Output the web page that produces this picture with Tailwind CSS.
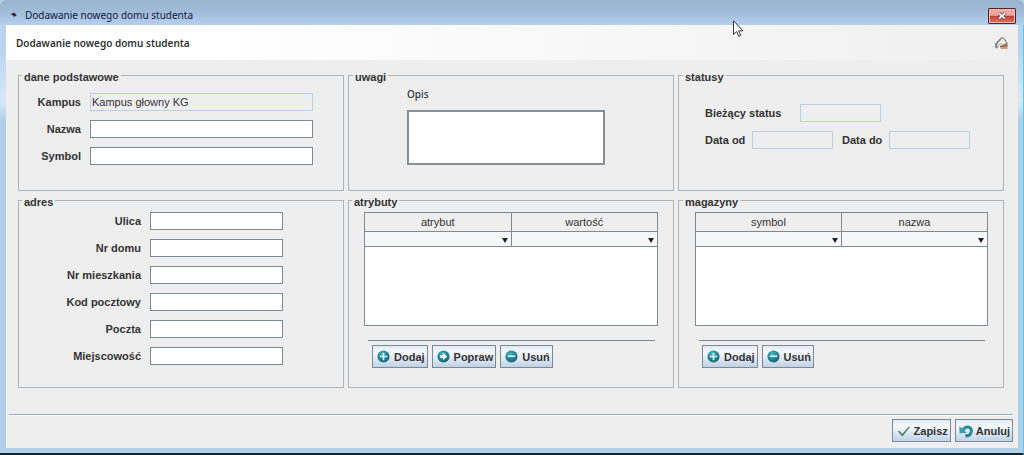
<!DOCTYPE html>
<html lang="pl">
<head>
<meta charset="utf-8">
<meta name="viewport" content="width=device-width, initial-scale=1">
<title>Dodawanie nowego domu studenta</title>
<script src="https://cdn.jsdelivr.net/npm/@tailwindcss/browser@4"></script>
</head>
<body class="min-h-screen flex flex-col bg-[#b7d2ea] font-['Liberation_Sans',Arial,sans-serif] text-[11px] leading-3 text-[#333]">

<svg class="absolute size-0" aria-hidden="true">
  <defs>
    <radialGradient id="ball" cx="0.4" cy="0.3" r="0.75">
      <stop offset="0" stop-color="#4db3bd"/><stop offset="0.55" stop-color="#218592"/><stop offset="1" stop-color="#17606f"/>
    </radialGradient>
    <symbol id="add" viewBox="0 0 14 14"><circle cx="7" cy="7" r="6.5" fill="url(#ball)"/><path d="M7 3v8M3 7h8" stroke="#d4f4f5" stroke-width="1.8"/></symbol>
    <symbol id="edit" viewBox="0 0 14 14"><circle cx="7" cy="7" r="6.5" fill="url(#ball)"/><path d="M3.5 5.4h3V3L11 7l-4.500 4V8.600h-3z" fill="#effcfc"/></symbol>
    <symbol id="remove" viewBox="0 0 14 14"><circle cx="7" cy="7" r="6.500" fill="url(#ball)"/><path d="M3 6.700h8" stroke="#d4f4f5" stroke-width="1.800"/></symbol>
  </defs>
</svg>

<!-- Title bar -->
<div class="h-[25px] shrink-0 flex items-center pl-[9px] pr-2 pt-1 rounded-t-md bg-linear-to-b from-[#99b4cf] via-[#a2bcd9] to-[#b5d0ef] font-['Noto_Sans',sans-serif] text-[10px] text-[#101c3c]">
  <svg class="size-[9px] mr-[7px]" viewBox="0 0 9 9" aria-hidden="true"><path d="M1.500 4.500 5 2.500l2 2 .5 1.500-2 .2L5 7.500 4.300 5.500z" fill="#3a2030"/></svg>
  <span class="flex-1">Dodawanie nowego domu studenta</span>
  <button type="button" aria-label="Zamknij" class="w-7 h-4 mt-0.5 flex items-center justify-center border border-[#53232c] rounded-[1px] bg-linear-to-b from-[#e9a79f] from-45% via-[#c23c31] via-50% to-[#da766a] shadow-[inset_0_0_0_1px_#edb8b2]">
    <svg class="w-[10px] h-2" viewBox="0 0 10 8" aria-hidden="true"><path d="M2 1.500 8 6.500M8 1.500 2 6.500" stroke="#5c4a50" stroke-width="3.400"/><path d="M2.200 1.600 7.800 6.400M7.800 1.600 2.200 6.400" stroke="#fff" stroke-width="1.900"/></svg>
  </button>
</div>

<!-- Window frame and client area -->
<div class="flex-1 flex flex-col pl-1.5 pr-[5px] pb-[5px] bg-linear-to-b from-[#b9d3ee] from-5% via-[#d9e8f8] via-18% to-[#b4cfe9] to-22% border-b-2 border-b-[#10262c] border-r border-r-[#53cbe8]">
  <form class="flex-1 flex flex-col bg-[#eee]">
    <header class="h-[35px] shrink-0 flex items-center justify-between pl-2.5 pr-2.5 bg-linear-to-r from-white from-20% to-[#efefef]">
      <h1 class="font-['Noto_Sans',sans-serif] text-[10px] font-semibold">Dodawanie nowego domu studenta</h1>
      <svg class="w-[14px] h-[14px]" viewBox="0 0 14 14" aria-hidden="true">
        <path d="M1.200 9 5.500 3.200 9 1l2.500 3 2 4.500v4.500H6L5.500 10 3.500 12.500z" fill="#f4f4f4"/>
        <path d="M6.500 2 2 6.500.8 9l.4 2.500 1.800 1L4.200 11 3 9.500l1-2.500L8 2.500 8.500 1z" fill="#808386"/>
        <path d="M8 1.500 10.500 3l2.300 4" fill="none" stroke="#66696c" stroke-width="1"/>
        <path d="M4.200 10.500 5.500 8 8 7" fill="none" stroke="#a8a8a8" stroke-width="1"/>
        <path d="M6 9.500 13.500 6.800v3.200z" fill="#8a7468"/>
        <path d="M5.500 10 13.500 9.300V13H7z" fill="#c9a27a"/>
        <path d="M6 10.300 13.500 9.800" stroke="#a3602f" stroke-width="1.200"/>
      </svg>
    </header>

    <main class="flex-1 grid grid-cols-3 gap-x-1 gap-y-0.5 content-start pl-3 pr-3.5 pt-2">
      <fieldset class="border border-[#aeb4b8] pl-[9px] pr-[30px] pt-2.5 pb-[25px] min-w-0">
        <legend class="-ml-[6px] px-0.5 pt-[3px] font-bold">dane podstawowe</legend>
        <div class="grid grid-cols-[53px_1fr] items-center gap-x-[9px] gap-y-[9px] text-right font-bold">
          <label for="kampus">Kampus</label>
          <input id="kampus" readonly value="Kampus głowny KG" class="h-[18px] w-full border border-[#b8cfe5] px-px font-normal">
          <label for="nazwa">Nazwa</label>
          <input id="nazwa" class="h-[18px] w-full border border-[#7a8a99] bg-white px-px font-normal">
          <label for="symbol">Symbol</label>
          <input id="symbol" class="h-[18px] w-full border border-[#7a8a99] bg-white px-px font-normal">
        </div>
      </fieldset>

      <fieldset class="border border-[#aeb4b8] px-[58px] pt-[5px] min-w-0">
        <legend class="-ml-[54px] px-0.5 pt-[3px] font-bold">uwagi</legend>
        <label for="opis" class="block font-['Noto_Sans',sans-serif] text-[10px] leading-3 font-medium">Opis</label>
        <textarea id="opis" class="block mt-2.5 h-[55px] w-[198px] resize-none border-2 border-[#838f99] bg-white p-0.5"></textarea>
      </fieldset>

      <fieldset class="border border-[#aeb4b8] pl-[26px] pr-3 pt-[21px] min-w-0">
        <legend class="-ml-[22px] px-0.5 pt-[3px] font-bold">statusy</legend>
        <div class="flex items-center font-bold">
          <label for="status" class="w-[95px]">Bieżący status</label>
          <input id="status" readonly class="h-[18px] w-[81px] border border-[#b8cfe5] px-px font-normal">
        </div>
        <div class="mt-[9px] flex items-center font-bold">
          <label for="od" class="w-[47px]">Data od</label>
          <input id="od" readonly class="h-[18px] w-[81px] border border-[#b8cfe5] px-px font-normal">
          <label for="do" class="ml-[9px] w-[47px]">Data do</label>
          <input id="do" readonly class="h-[18px] w-[81px] border border-[#b8cfe5] px-px font-normal">
        </div>
      </fieldset>

      <fieldset class="border border-[#aeb4b8] pl-[9px] pr-[60px] pt-1 pb-[22px] min-w-0">
        <legend class="-ml-[6px] px-0.5 pt-[3px] font-bold">adres</legend>
        <div class="grid grid-cols-[113px_1fr] items-center gap-x-[9px] gap-y-[9px] text-right font-bold">
          <label for="ulica">Ulica</label>
          <input id="ulica" class="h-[18px] w-full border border-[#7a8a99] bg-white px-px font-normal">
          <label for="dom">Nr domu</label>
          <input id="dom" class="h-[18px] w-full border border-[#7a8a99] bg-white px-px font-normal">
          <label for="mieszkanie">Nr mieszkania</label>
          <input id="mieszkanie" class="h-[18px] w-full border border-[#7a8a99] bg-white px-px font-normal">
          <label for="kod">Kod pocztowy</label>
          <input id="kod" class="h-[18px] w-full border border-[#7a8a99] bg-white px-px font-normal">
          <label for="poczta">Poczta</label>
          <input id="poczta" class="h-[18px] w-full border border-[#7a8a99] bg-white px-px font-normal">
          <label for="miejscowosc">Miejscowość</label>
          <input id="miejscowosc" class="h-[18px] w-full border border-[#7a8a99] bg-white px-px font-normal">
        </div>
      </fieldset>

      <fieldset class="border border-[#aeb4b8] px-[15px] pt-1 min-w-0">
        <legend class="-ml-[12px] px-0.5 pt-[3px] font-bold">atrybuty</legend>
        <div class="h-[114px] border border-[#7a8a99] bg-white">
          <table class="w-full table-fixed border-collapse">
            <thead>
              <tr class="h-[18px] bg-[#eee]">
                <th class="border-b border-r border-[#7a8a99] font-normal">atrybut</th>
                <th class="border-b border-[#7a8a99] font-normal">wartość</th>
              </tr>
            </thead>
            <tbody>
              <tr class="h-[15px] bg-[#f6f7f9]">
                <td class="relative border-b border-r border-[#7a8a99] p-0">
                  <select aria-label="Filtr atrybut" class="block h-[14px] w-full appearance-none"><option></option></select>
                  <svg class="absolute right-[3px] top-[6px] w-[6px] h-[5px] pointer-events-none" viewBox="0 0 6 5" aria-hidden="true"><path d="M0 0h6L3 5z" fill="#222"/></svg>
                </td>
                <td class="relative border-b border-[#7a8a99] p-0">
                  <select aria-label="Filtr wartość" class="block h-[14px] w-full appearance-none"><option></option></select>
                  <svg class="absolute right-[3px] top-[6px] w-[6px] h-[5px] pointer-events-none" viewBox="0 0 6 5" aria-hidden="true"><path d="M0 0h6L3 5z" fill="#222"/></svg>
                </td>
              </tr>
            </tbody>
          </table>
        </div>
        <hr class="mt-3.5 ml-1 mr-[3px] border-[#7a8a99]">
        <div class="mt-1 ml-2 flex gap-1 font-bold">
          <button type="button" class="h-[23px] flex items-center gap-1 border border-[#7a8a99] bg-linear-to-b from-[#dfe9f3] via-[#f7f9fb] via-30% to-[#c0d2e6] pl-1 pr-0.5"><svg class="size-[13px]" aria-hidden="true"><use href="#add"/></svg>Dodaj</button>
          <button type="button" class="h-[23px] flex items-center gap-1 border border-[#7a8a99] bg-linear-to-b from-[#dfe9f3] via-[#f7f9fb] via-30% to-[#c0d2e6] pl-1 pr-0.5"><svg class="size-[13px]" aria-hidden="true"><use href="#edit"/></svg>Popraw</button>
          <button type="button" class="h-[23px] flex items-center gap-1 border border-[#7a8a99] bg-linear-to-b from-[#dfe9f3] via-[#f7f9fb] via-30% to-[#c0d2e6] pl-1 pr-0.5"><svg class="size-[13px]" aria-hidden="true"><use href="#remove"/></svg>Usuń</button>
        </div>
      </fieldset>

      <fieldset class="border border-[#aeb4b8] pl-4 pr-[15px] pt-1 min-w-0">
        <legend class="-ml-3 px-0.5 pt-[3px] font-bold">magazyny</legend>
        <div class="h-[114px] border border-[#7a8a99] bg-white">
          <table class="w-full table-fixed border-collapse">
            <thead>
              <tr class="h-[18px] bg-[#eee]">
                <th class="border-b border-r border-[#7a8a99] font-normal">symbol</th>
                <th class="border-b border-[#7a8a99] font-normal">nazwa</th>
              </tr>
            </thead>
            <tbody>
              <tr class="h-[15px] bg-[#f6f7f9]">
                <td class="relative border-b border-r border-[#7a8a99] p-0">
                  <select aria-label="Filtr symbol" class="block h-[14px] w-full appearance-none"><option></option></select>
                  <svg class="absolute right-[3px] top-[6px] w-[6px] h-[5px] pointer-events-none" viewBox="0 0 6 5" aria-hidden="true"><path d="M0 0h6L3 5z" fill="#222"/></svg>
                </td>
                <td class="relative border-b border-[#7a8a99] p-0">
                  <select aria-label="Filtr nazwa" class="block h-[14px] w-full appearance-none"><option></option></select>
                  <svg class="absolute right-[3px] top-[6px] w-[6px] h-[5px] pointer-events-none" viewBox="0 0 6 5" aria-hidden="true"><path d="M0 0h6L3 5z" fill="#222"/></svg>
                </td>
              </tr>
            </tbody>
          </table>
        </div>
        <hr class="mt-3.5 ml-1 mr-[3px] border-[#7a8a99]">
        <div class="mt-1 ml-[7px] flex gap-1 font-bold">
          <button type="button" class="h-[23px] flex items-center gap-1 border border-[#7a8a99] bg-linear-to-b from-[#dfe9f3] via-[#f7f9fb] via-30% to-[#c0d2e6] pl-1 pr-0.5"><svg class="size-[13px]" aria-hidden="true"><use href="#add"/></svg>Dodaj</button>
          <button type="button" class="h-[23px] flex items-center gap-1 border border-[#7a8a99] bg-linear-to-b from-[#dfe9f3] via-[#f7f9fb] via-30% to-[#c0d2e6] pl-1 pr-0.5"><svg class="size-[13px]" aria-hidden="true"><use href="#remove"/></svg>Usuń</button>
        </div>
      </fieldset>
    </main>

    <footer class="ml-[3px] mr-[5px] pt-1 pb-1.5 flex justify-end gap-1 border-t border-[#99abc9] font-bold shadow-[inset_0_1px_0_#fff]">
      <button type="submit" class="h-[23px] flex items-center gap-[3px] border border-[#7a8a99] bg-linear-to-b from-[#dfe9f3] via-[#f7f9fb] via-30% to-[#c0d2e6] pl-1 pr-0.5">
        <svg class="size-[14px]" viewBox="0 0 14 14" aria-hidden="true"><path d="M1 7.500 2.200 6.800 5.200 10 12 2.500 13 3 5.300 12.500z" fill="#447a58"/></svg>Zapisz</button>
      <button type="button" class="h-[23px] flex items-center gap-[3px] border border-[#7a8a99] bg-linear-to-b from-[#dfe9f3] via-[#f7f9fb] via-30% to-[#c0d2e6] pl-[3px] pr-0.5">
        <svg class="size-[14px]" viewBox="0 0 14 14" aria-hidden="true"><path d="M4.500 5.500C7 1.500 12.400 2.500 12.400 7c0 3.200-2.500 5.200-5.700 5" fill="none" stroke="#2f88a0" stroke-width="3"/><path d="M.2 2 .6 9.300l7.400-.4-2.300-2L7.200 4.500 4.500 3 2.600 4.300z" fill="#3f9db2"/><path d="M6 11.200c2.600.3 4.800-.8 5.500-2.900" fill="none" stroke="#1d647d" stroke-width="1"/></svg>Anuluj</button>
    </footer>
  </form>
</div>

<!-- Mouse pointer -->
<svg class="absolute left-[733px] top-5 w-[11px] h-[17px] pointer-events-none" viewBox="0 0 11 17" aria-hidden="true"><path d="M.5.7v13.800l3.100-3 2.100 4.800 2-.9-2.100-4.600h4.300z" fill="#fff" stroke="#35353f" stroke-width="1"/></svg>
</body>
</html>
